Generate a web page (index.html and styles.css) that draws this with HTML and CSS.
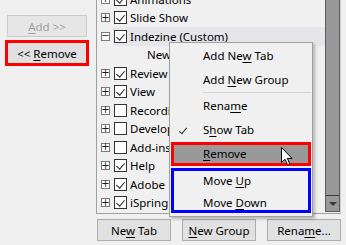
FILE: index.html
```html
<!DOCTYPE html>
<html lang="en">
<head>
    <meta charset="UTF-8">
    <title>Customize Ribbon</title>
    <link rel="stylesheet" href="styles.css">
</head>
<body>
    <div class="window">
        <!-- Add / Remove buttons -->
        <div class="side">
            <button class="btn btn-disabled"><u>A</u>dd &gt;&gt;</button>
            <button class="btn btn-marked">&lt;&lt; <u>R</u>emove</button>
        </div>

        <div class="main">
            <div class="tree">
                <div class="tree-view">
                    <div class="tree-rows">
                        <div class="row"><span class="exp">+</span><span class="item"><span class="chk on"></span>Animations</span></div>
                        <div class="row"><span class="exp">+</span><span class="item"><span class="chk on"></span>Slide Show</span></div>
                        <div class="row"><span class="exp">&minus;</span><span class="item selected"><span class="chk on"></span>Indezine (Custom)</span></div>
                        <div class="row child">New Group</div>
                        <div class="row"><span class="exp">+</span><span class="item"><span class="chk on"></span>Review</span></div>
                        <div class="row"><span class="exp">+</span><span class="item"><span class="chk on"></span>View</span></div>
                        <div class="row"><span class="exp">+</span><span class="item"><span class="chk"></span>Recording</span></div>
                        <div class="row"><span class="exp">+</span><span class="item"><span class="chk"></span>Developer</span></div>
                        <div class="row"><span class="exp">+</span><span class="item"><span class="chk"></span>Add-ins</span></div>
                        <div class="row"><span class="exp">+</span><span class="item"><span class="chk on"></span>Help</span></div>
                        <div class="row"><span class="exp">+</span><span class="item"><span class="chk on"></span>Adobe</span></div>
                        <div class="row"><span class="exp">+</span><span class="item"><span class="chk on"></span>iSpring</span></div>
                    </div>
                </div>
                <div class="scrollbar">
                    <div class="scroll-down"></div>
                </div>
            </div>

            <div class="actions">
                <button class="btn">Ne<u>w</u> Tab</button>
                <button class="btn"><u>N</u>ew Group</button>
                <button class="btn">Rena<u>m</u>e...</button>
            </div>
        </div>

        <!-- right-click menu -->
        <div class="menu">
            <div class="menu-item">Add Ne<u>w</u> Tab</div>
            <div class="menu-item">Add <u>N</u>ew Group</div>
            <div class="menu-sep"></div>
            <div class="menu-item">Rena<u>m</u>e</div>
            <div class="menu-item checked">S<u>h</u>ow Tab</div>
            <div class="menu-item hover"><u>R</u>emove</div>
            <div class="menu-group">
                <div class="menu-item">Move <u>U</u>p</div>
                <div class="menu-item">Move <u>D</u>own</div>
            </div>
        </div>

        <svg class="cursor" width="12" height="19" viewBox="0 0 12 19">
            <path d="M0.5 0.5 L0.5 15.5 L4 12.2 L6.6 18 L8.8 17 L6.3 11.4 L11 11.4 Z" fill="#fff" stroke="#000" stroke-width="1" stroke-linejoin="miter"/>
        </svg>
    </div>
</body>
</html>
```

FILE: styles.css
```css
* {
    box-sizing: border-box;
}
body {
    margin: 0;
    background-color: #f0f0f0;
    font-family: "Noto Sans", sans-serif;
    font-size: 11.5px;
    color: #000000;
}
u {
    text-underline-offset: 2px;
}
.window {
    position: relative;
    width: 346px;
    height: 245px;
    overflow: hidden;
    display: flex;
}

/* buttons */
.btn {
    font-family: inherit;
    font-size: 11.5px;
    color: #000000;
    background-color: #e1e1e1;
    border: 1px solid #adadad;
    height: 22px;
    padding: 0;
    margin: 0;
}
.btn-disabled {
    background-color: #e6e6e6;
    border-color: #cccccc;
    color: #a0a0a0;
}
.btn-marked {
    outline: 3px solid #ff0000;
    outline-offset: -1px;
}

.side {
    width: 96px;
    padding: 15px 0 0 7px;
    display: flex;
    flex-direction: column;
    gap: 5px;
}
.side .btn {
    width: 80px;
}

.main {
    width: 245px;
    display: flex;
    flex-direction: column;
}

/* tree */
.tree {
    height: 214px;
    border: 1px solid #a0a0a0;
    border-top: none;
    border-right-color: #d0d0d0;
    display: flex;
}
.tree-view {
    flex: 1;
    overflow: hidden;
}
.tree-rows {
    margin-top: -10.25px;
}
.row {
    height: 18.5px;
    display: flex;
    align-items: center;
    padding-left: 4px;
    white-space: nowrap;
}
.row.child {
    padding-left: 50px;
}
.exp {
    width: 9px;
    height: 9px;
    border: 1px solid #7a7a7a;
    background-color: #ffffff;
    font-size: 10px;
    line-height: 6px;
    text-align: center;
    color: #1a1a1a;
    font-family: "DejaVu Sans", sans-serif;
    display: flex;
    justify-content: center;
    align-items: center;
    flex-shrink: 0;
}
.item {
    flex: 1;
    height: 19px;
    margin-left: 3px;
    padding-left: 1px;
    display: flex;
    align-items: center;
    gap: 3px;
}
.item.selected {
    background-color: #e5e5ea;
}
.chk {
    width: 13px;
    height: 13px;
    border: 1px solid #333333;
    background-color: #ffffff;
    flex-shrink: 0;
    position: relative;
}
.chk.on::after {
    content: "";
    position: absolute;
    left: 3px;
    top: 1px;
    width: 4px;
    height: 7px;
    border: solid #222222;
    border-width: 0 1.4px 1.4px 0;
    transform: rotate(40deg);
}

.scrollbar {
    width: 15px;
    background-color: #999999;
    border: 1px solid #5c5c5c;
    border-top: none;
    display: flex;
    flex-direction: column;
    justify-content: flex-end;
    margin-bottom: 1px;
}
.scroll-down {
    height: 16px;
    border-top: 1px solid #3c3c3c;
    position: relative;
}
.scroll-down::after {
    content: "";
    position: absolute;
    left: 3px;
    top: 6px;
    border-left: 4px solid transparent;
    border-right: 4px solid transparent;
    border-top: 4px solid #3a3a3a;
}

.actions {
    margin-top: 5px;
    padding-left: 1px;
    display: flex;
    gap: 11px;
}
.actions .btn {
    width: 74px;
}

/* context menu */
.menu {
    position: absolute;
    left: 169px;
    top: 42px;
    width: 144px;
    height: 175px;
    background-color: #f0f0f0;
    border: 1px solid #a0a0a0;
    padding: 1px 1px 0 1px;
    box-shadow: 2px 2px 3px rgba(0, 0, 0, 0.25);
}
.menu-item {
    height: 24px;
    line-height: 24px;
    padding-left: 32px;
    position: relative;
    white-space: nowrap;
}
.menu-sep {
    height: 2px;
    margin-left: 32px;
    border-top: 1px solid #d5d5d5;
}
.menu-item.checked::before {
    content: "";
    position: absolute;
    left: 10px;
    top: 8px;
    width: 3px;
    height: 7px;
    border: solid #222222;
    border-width: 0 1.5px 1.5px 0;
    transform: rotate(40deg);
}
.menu-item.hover {
    background-color: #999999;
    border: 3px solid #ff0000;
    line-height: 18px;
    padding-left: 29px;
}
.menu-group {
    margin-top: 2px;
    height: 45px;
    border: 3px solid #0000ff;
}
.menu-group .menu-item {
    height: 20px;
    line-height: 20px;
    padding-left: 29px;
}
.menu-group .menu-item + .menu-item {
    margin-top: 2px;
}

.cursor {
    position: absolute;
    left: 281px;
    top: 147px;
}
```
